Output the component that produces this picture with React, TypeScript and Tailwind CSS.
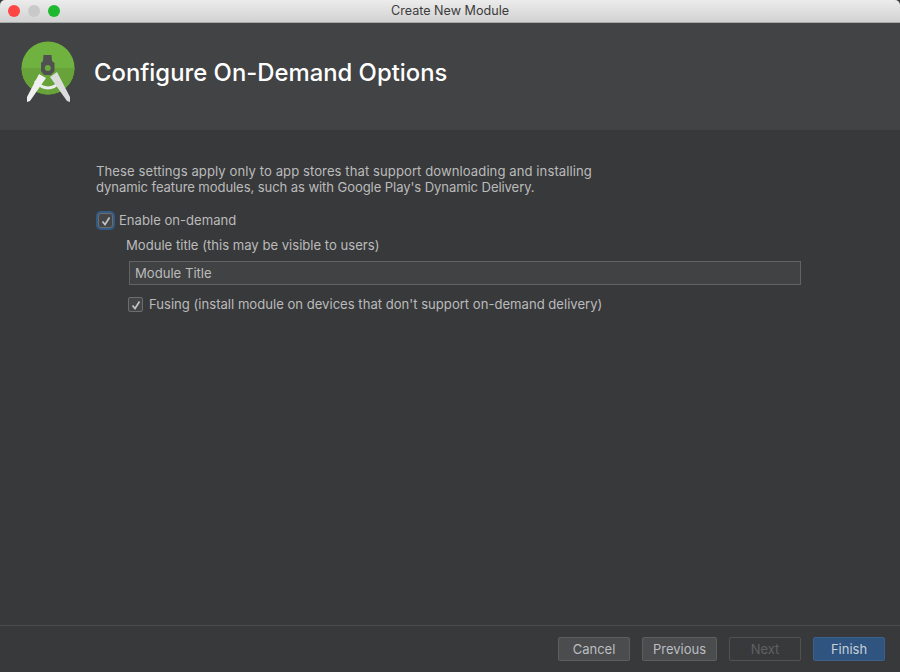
const FONT = "font-['Inter','Liberation_Sans',sans-serif]";

function AndroidStudioLogo() {
  return (
    <svg width="56" height="62" viewBox="0 0 56 62" className="shrink-0">
      <circle cx="28" cy="27" r="26.5" fill="#6fb23f" />
      <path d="M1.5 27 A26.5 26.5 0 0 0 54.5 27 Z" fill="#67a339" />
      <path d="M15 40 Q28 54 41 40" fill="none" stroke="#ececec" strokeWidth="3" />
      <path d="M19 33 L26 37 L10 60 L7 61 L7 56 Z" fill="#f0f0f0" />
      <path d="M30 36 L37 31 L50 56 L50 61 L47 60 Z" fill="#dcdcdc" />
      <path d="M23.5 14 L31.5 14 L32 20 L34.5 22 L34.5 30 L31 34 L24 34 L21 30 L21 22 L23 20 Z" fill="#505052" />
      <circle cx="27.8" cy="27" r="3" fill="#6aa83b" />
    </svg>
  );
}

function Check({ focused }: { focused?: boolean }) {
  return (
    <span
      className={
        focused
          ? "flex h-[15px] w-[15px] items-center justify-center rounded-[3px] border border-[#6b6d6f] bg-[#434546] shadow-[0_0_0_2px_#325a85]"
          : "flex h-[15px] w-[15px] items-center justify-center rounded-[2px] border border-[#6b6d6f] bg-[#434546]"
      }
    >
      <svg width="10" height="10" viewBox="0 0 10 10">
        <path d="M1.5 5.5 L4 8.5 L8.5 1.5" fill="none" stroke="#c4c4c4" strokeWidth="1.7" />
      </svg>
    </span>
  );
}

function Button({ label, variant, width }: { label: string; variant?: "disabled" | "primary"; width: string }) {
  const tone =
    variant === "disabled"
      ? "border-[#505254] bg-[#37393a] text-[#5f6163]"
      : variant === "primary"
        ? "border-[#3d608a] bg-[#2f5480] text-[#c8d0d8]"
        : "border-[#5c5e60] bg-[#4a4c4e] text-[#bcbec0]";
  return (
    <button className={`flex h-[24px] items-center justify-center rounded-[2px] border pt-[1px] text-[13px] ${width} ${tone}`}>
      {label}
    </button>
  );
}

export default function App() {
  return (
    <div className={`${FONT} flex h-[672px] w-[900px] flex-col bg-[#38393b] text-[#bbbbbb]`}>
      <div className="relative flex h-[23px] shrink-0 items-center justify-center rounded-t-[5px] border-b border-[#a8a8a8] bg-gradient-to-b from-[#ececec] to-[#d2d2d2]">
        <div className="absolute left-[8px] top-[5px] flex gap-[8px]">
          <span className="h-[12px] w-[12px] rounded-full bg-[#fc4744]" />
          <span className="h-[12px] w-[12px] rounded-full bg-[#c9c9c9]" />
          <span className="h-[12px] w-[12px] rounded-full bg-[#1fb92f]" />
        </div>
        <span className="text-[12.6px] text-[#3c3c3c]">Create New Module</span>
      </div>

      <div className="flex h-[107px] shrink-0 items-center gap-[18px] border-b border-[#414345] bg-[#424344] pb-[9px] pl-[20px]">
        <AndroidStudioLogo />
        <h1 className="mt-[2px] text-[23.85px] font-medium text-white">Configure On-Demand Options</h1>
      </div>

      <div className="flex flex-1 flex-col pl-[96px] pr-[99px] pt-[33px] text-[13.1px] leading-[19px]">
        <p className="leading-[16px]">
          <span className="tracking-[0.07px]">These settings apply only to app stores that support downloading and installing</span>
          <br />
          <span className="tracking-[-0.1px]">dynamic feature modules, such as with Google Play's Dynamic Delivery.</span>
        </p>
        <label className="mt-[16px] flex items-center gap-[6px] pl-[2px]">
          <Check focused />
          <span>Enable on-demand</span>
        </label>
        <div className="mt-[6px] pl-[30px]">Module title (this may be visible to users)</div>
        <div className="ml-[33px] mt-[6px] flex h-[24px] items-center border border-[#626364] bg-[#414243] px-[5px]">
          Module Title
        </div>
        <label className="ml-[32px] mt-[10px] flex items-center gap-[6px]">
          <Check />
          <span>Fusing (install module on devices that don't support on-demand delivery)</span>
        </label>
      </div>

      <div className="flex h-[47px] shrink-0 items-start justify-end gap-[12px] border-t border-[#4a4c4e] pr-[15px] pt-[11px]">
        <Button label="Cancel" width="w-[72px]" />
        <Button label="Previous" width="w-[75px]" />
        <Button label="Next" variant="disabled" width="w-[72px]" />
        <Button label="Finish" variant="primary" width="w-[72px]" />
      </div>
    </div>
  );
}
